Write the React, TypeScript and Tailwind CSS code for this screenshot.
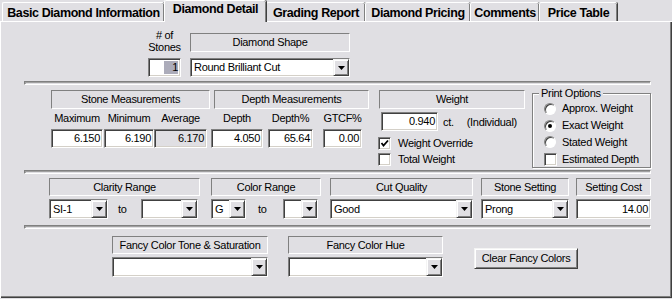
import React from 'react'

// classic win32 look: raised / sunken edges
const sunkenEdge =
  'border border-t-[#808080] border-l-[#808080] border-r-white border-b-white shadow-[inset_1px_1px_0_#404040,inset_-1px_-1px_0_#d4d0c8]'
const captionEdge = 'border border-t-[#808080] border-l-[#808080] border-r-white border-b-white'
const raisedEdge =
  'border border-t-[#f4f4f4] border-l-[#f4f4f4] border-r-[#404040] border-b-[#404040] shadow-[inset_1px_1px_0_#ffffff,inset_-1px_-1px_0_#808080]'

const tabs = [
  { label: 'Basic Diamond Information', w: 162 },
  { label: 'Diamond Detail', w: 102, active: true },
  { label: 'Grading Report', w: 99 },
  { label: 'Diamond Pricing', w: 105 },
  { label: 'Comments', w: 69 },
  { label: 'Price Table', w: 78 },
]

function Caption({ w, h = 19, children }: { w: number; h?: number; children: React.ReactNode }) {
  return (
    <div className={`flex items-center justify-center ${captionEdge}`} style={{ width: w, height: h }}>
      {children}
    </div>
  )
}

function Field({ w, h = 19, value, readOnly }: { w: number; h?: number; value: string; readOnly?: boolean }) {
  return (
    <div
      className={`flex items-center justify-end pr-[2px] ${sunkenEdge} ${readOnly ? 'bg-[#e0dfe3]' : 'bg-white'}`}
      style={{ width: w, height: h }}
    >
      {value}
    </div>
  )
}

function Combo({ w, h = 20, value = '' }: { w: number; h?: number; value?: string }) {
  return (
    <div className={`flex items-stretch bg-white ${sunkenEdge}`} style={{ width: w, height: h }}>
      <div className="flex-1 flex items-center pl-[3px] overflow-hidden whitespace-nowrap">{value}</div>
      <div className={`w-[16px] flex items-center justify-center bg-[#e0dfe3] ${raisedEdge}`}>
        <svg width="7" height="4" viewBox="0 0 7 4">
          <polygon points="0,0 7,0 3.5,4" fill="#000" />
        </svg>
      </div>
    </div>
  )
}

function Check({ checked }: { checked?: boolean }) {
  return (
    <div className={`w-[13px] h-[13px] bg-white flex items-center justify-center ${sunkenEdge}`}>
      {checked && (
        <svg width="9" height="9" viewBox="0 0 9 9">
          <path d="M1.5 4 L3.5 6.5 L8 1.5" stroke="#000" strokeWidth="1.8" fill="none" />
        </svg>
      )}
    </div>
  )
}

function Radio({ checked }: { checked?: boolean }) {
  return (
    <div className="w-[12px] h-[12px] rounded-full bg-white flex items-center justify-center border border-t-[#808080] border-l-[#808080] border-r-white border-b-white shadow-[inset_1px_1px_0_#404040]">
      {checked && <div className="w-[4px] h-[4px] rounded-full bg-black" />}
    </div>
  )
}

function Separator() {
  return (
    <div className="ml-[24px] w-[627px] h-[4px] border border-t-[#808080] border-l-[#808080] border-r-white border-b-white shadow-[inset_1px_1px_0_#a0a0a0]" />
  )
}

export default function App() {
  return (
    <div className="w-[672px] h-[299px] bg-[#e0dfe3] text-black text-[11px] tracking-[-0.3px] leading-[13px] font-['Liberation_Sans',Arial,sans-serif] flex flex-col overflow-hidden">
      {/* tab strip */}
      <div className="flex items-end h-[21px] pl-[2px]">
        {tabs.map((t) =>
          t.active ? (
            <div
              key={t.label}
              className="relative z-10 h-[22px] -mb-[1px] bg-[#e0dfe3] flex justify-center pt-[1px] border-l border-t border-white rounded-t-[2px] shadow-[inset_-1px_0_0_#808080,1px_0_0_#404040] text-[12.5px] tracking-[-0.4px] font-bold leading-[14px]"
              style={{ width: t.w }}
            >
              {t.label}
            </div>
          ) : (
            <div
              key={t.label}
              className="h-[19px] flex justify-center items-center border-l border-t border-white rounded-t-[2px] shadow-[inset_-1px_0_0_#808080,1px_0_0_#404040] text-[12.5px] tracking-[-0.4px] font-bold leading-[14px] pt-[1px]"
              style={{ width: t.w }}
            >
              {t.label}
            </div>
          )
        )}
      </div>

      {/* panel */}
      <div className="h-[277px] flex flex-col shadow-[inset_1px_1px_0_#ffffff,inset_-1px_-1px_0_#404040,inset_-2px_-2px_0_#808080]">
        {/* stones + shape */}
        <div className="flex items-end mt-[8px] ml-[148px]">
          <div className="flex flex-col items-center w-[33px]">
            <div className="text-center leading-[12px]">
              # of
              <br />
              Stones
            </div>
            <div className={`mt-[5px] w-[33px] h-[19px] bg-white flex items-center justify-end pr-[2px] ${sunkenEdge}`}>
              <span className="bg-[#acacba] w-[14px] text-right">1</span>
            </div>
          </div>
          <div className="flex flex-col ml-[9px]">
            <Caption w={160}>Diamond Shape</Caption>
            <div className="mt-[6px]">
              <Combo w={160} h={19} value="Round Brilliant Cut" />
            </div>
          </div>
        </div>

        <div className="mt-[4px]">
          <Separator />
        </div>

        {/* measurements / weight / print options */}
        <div className="flex items-start mt-[1px] h-[82px]">
          <div className="ml-[51px] mt-[4px] w-[160px] flex flex-col">
            <Caption w={159}>Stone Measurements</Caption>
            <div className="flex mt-[3px]">
              <div className="flex flex-col items-center w-[52px]">
                <span>Maximum</span>
                <div className="mt-[4px]"><Field w={52} value="6.150" /></div>
              </div>
              <div className="flex flex-col items-center w-[50px] ml-[1px]">
                <span>Minimum</span>
                <div className="mt-[4px]"><Field w={50} value="6.190" /></div>
              </div>
              <div className="flex flex-col items-center w-[53px]">
                <span>Average</span>
                <div className="mt-[4px]"><Field w={53} value="6.170" readOnly /></div>
              </div>
            </div>
          </div>

          <div className="mt-[4px] w-[158px] flex flex-col">
            <div className="ml-[3px]"><Caption w={155}>Depth Measurements</Caption></div>
            <div className="flex mt-[3px]">
              <div className="flex flex-col items-center w-[52px]">
                <span>Depth</span>
                <div className="mt-[4px]"><Field w={52} value="4.050" /></div>
              </div>
              <div className="flex flex-col items-center w-[45px] ml-[5px]">
                <span>Depth%</span>
                <div className="mt-[4px]"><Field w={45} value="65.64" /></div>
              </div>
              <div className="flex flex-col items-center w-[39px] ml-[10px]">
                <span>GTCF%</span>
                <div className="mt-[4px]"><Field w={39} value="0.00" /></div>
              </div>
            </div>
          </div>

          <div className="ml-[9px] mt-[4px] w-[147px] flex flex-col">
            <div className="ml-[1px]"><Caption w={146}>Weight</Caption></div>
            <div className="flex items-end mt-[3px]">
              <div className="ml-[3px]"><Field w={57} value="0.940" /></div>
              <span className="ml-[5px] pb-[2px]">ct.</span>
              <span className="ml-[13px] pb-[2px]">(Individual)</span>
            </div>
            <div className="flex flex-col mt-[4px]">
              <div className="h-[16px] flex items-center">
                <Check checked />
                <span className="ml-[7px]">Weight Override</span>
              </div>
              <div className="h-[16px] flex items-center">
                <Check />
                <span className="ml-[7px]">Total Weight</span>
              </div>
            </div>
          </div>

          <div className="relative ml-[7px] mt-[7px] w-[119px] h-[75px] border border-[#808080] shadow-[inset_1px_1px_0_#ffffff,1px_1px_0_#ffffff] flex flex-col pt-[7px] pl-[11px] gap-[1px]">
            <span className="absolute -top-[7px] left-[6px] px-[2px] bg-[#e0dfe3]">Print Options</span>
            <div className="h-[16px] flex items-center">
              <Radio />
              <span className="ml-[6px]">Approx. Weight</span>
            </div>
            <div className="h-[16px] flex items-center">
              <Radio checked />
              <span className="ml-[6px]">Exact Weight</span>
            </div>
            <div className="h-[16px] flex items-center">
              <Radio />
              <span className="ml-[6px]">Stated Weight</span>
            </div>
            <div className="h-[16px] flex items-center">
              <Check />
              <span className="ml-[5px]">Estimated Depth</span>
            </div>
          </div>
        </div>

        <div className="mt-[2px]">
          <Separator />
        </div>

        {/* clarity / color / cut / setting */}
        <div className="flex items-start mt-[4px]">
          <div className="ml-[49px] w-[151px] flex flex-col">
            <Caption w={151} h={18}>Clarity Range</Caption>
            <div className="flex items-center mt-[3px]">
              <Combo w={59} value="SI-1" />
              <span className="w-[33px] pl-[10px]">to</span>
              <Combo w={57} />
            </div>
          </div>
          <div className="ml-[11px] w-[110px] flex flex-col">
            <Caption w={110} h={18}>Color Range</Caption>
            <div className="flex items-center mt-[3px]">
              <Combo w={35} value="G" />
              <span className="w-[37px] pl-[12px]">to</span>
              <Combo w={35} />
            </div>
          </div>
          <div className="ml-[9px] w-[143px] flex flex-col">
            <Caption w={143} h={18}>Cut Quality</Caption>
            <div className="mt-[3px]"><Combo w={143} value="Good" /></div>
          </div>
          <div className="ml-[8px] w-[88px] flex flex-col">
            <Caption w={88} h={18}>Stone Setting</Caption>
            <div className="mt-[3px]"><Combo w={88} value="Prong" /></div>
          </div>
          <div className="ml-[7px] w-[75px] flex flex-col">
            <Caption w={75} h={18}>Setting Cost</Caption>
            <div className="mt-[3px]"><Field w={75} h={20} value="14.00" /></div>
          </div>
        </div>

        <div className="mt-[6px]">
          <Separator />
        </div>

        {/* fancy colours */}
        <div className="flex items-start mt-[7px]">
          <div className="ml-[112px] w-[156px] flex flex-col">
            <Caption w={156} h={18}>Fancy Color Tone &amp; Saturation</Caption>
            <div className="mt-[3px]"><Combo w={156} /></div>
          </div>
          <div className="ml-[20px] w-[155px] flex flex-col">
            <Caption w={155} h={18}>Fancy Color Hue</Caption>
            <div className="mt-[3px]"><Combo w={155} /></div>
          </div>
          <button
            className={`ml-[31px] mt-[12px] w-[104px] h-[21px] flex items-center justify-center bg-[#e0dfe3] ${raisedEdge}`}
          >
            Clear Fancy Colors
          </button>
        </div>
      </div>
    </div>
  )
}
